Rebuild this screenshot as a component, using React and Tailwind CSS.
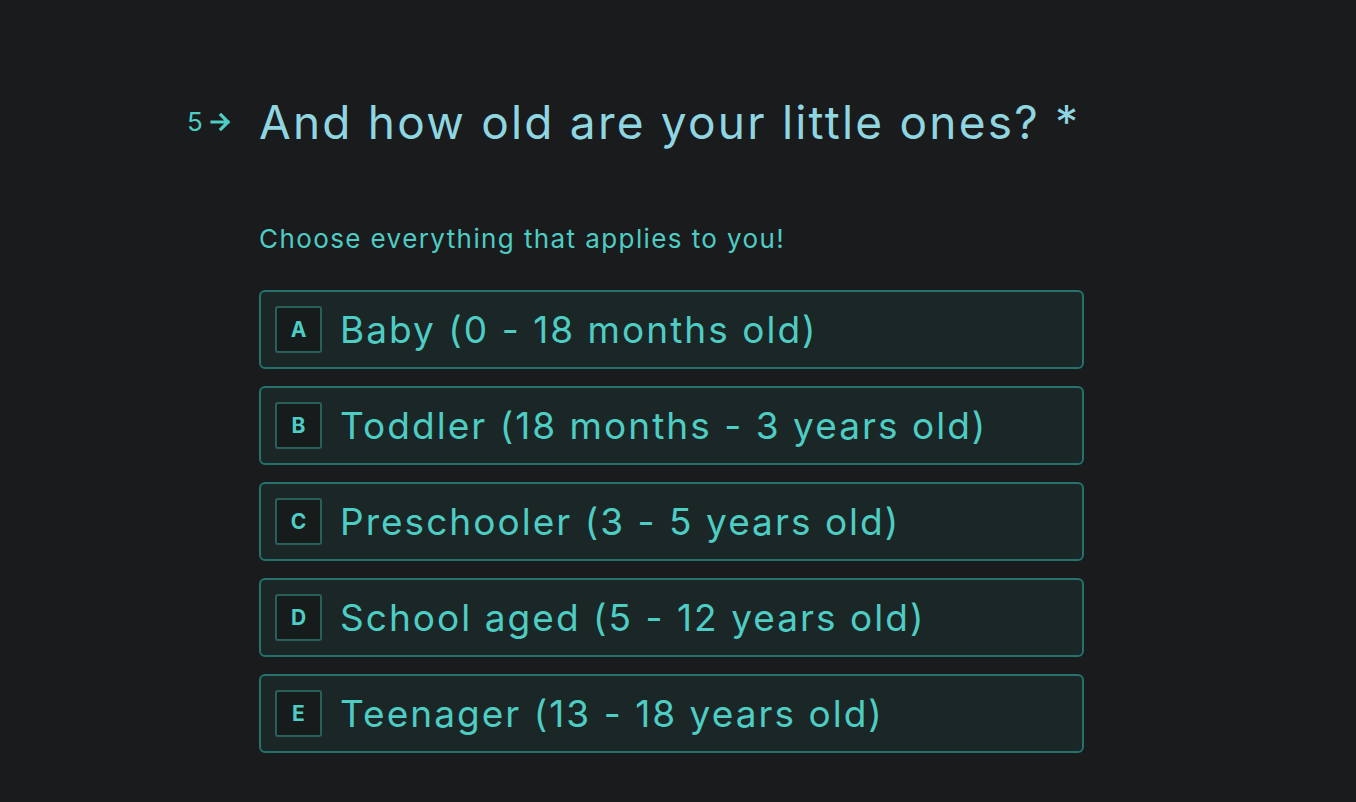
import React from "react";

const options = [
  ["A", "Baby (0 - 18 months old)"],
  ["B", "Toddler (18 months - 3 years old)"],
  ["C", "Preschooler (3 - 5 years old)"],
  ["D", "School aged (5 - 12 years old)"],
  ["E", "Teenager (13 - 18 years old)"],
];

export default function App() {
  return (
    <div className="w-[1356px] h-[802px] bg-[#1a1b1d] overflow-hidden" style={{ fontFamily: "Inter, 'Open Sans', sans-serif" }}>
      <div className="pt-[92px] pl-[187px]">
        <div className="flex items-center h-[60px]">
          <div className="w-[72px] flex items-center text-[#4ecdc4] text-[26px] leading-none">
            <span>5</span>
            <svg className="ml-[7px]" width="22" height="20" viewBox="0 0 22 20" fill="none">
              <path d="M2 10h16M11 3l7 7-7 7" stroke="#4ecdc4" strokeWidth="3.2" strokeLinecap="square" />
            </svg>
          </div>
          <h1 className="text-[46px] text-[#8fd6e1] font-normal tracking-[0.048em] leading-none">And how old are your little ones? *</h1>
        </div>
        <div className="pl-[72px]">
          <p className="mt-[70px] text-[26px] leading-[34px] text-[#4ecdc4] tracking-[0.054em]">Choose everything that applies to you!</p>
          <div className="mt-[34px] flex flex-col gap-[17px] w-[825px]">
            {options.map(([k, t]) => (
              <div key={k} className="h-[79px] flex items-center rounded-[6px] border-2 border-[#24726b] bg-[#1b2727] pl-[14px]">
                <div className="w-[47px] h-[47px] rounded-[3px] border-2 border-[#28605c] bg-[#161c1c] flex items-center justify-center text-[#4ecdc4] text-[21px] font-bold">{k}</div>
                <span className="ml-[18px] text-[37px] text-[#4ecdc4] tracking-[0.055em] leading-none">{t}</span>
              </div>
            ))}
          </div>
        </div>
      </div>
    </div>
  );
}
